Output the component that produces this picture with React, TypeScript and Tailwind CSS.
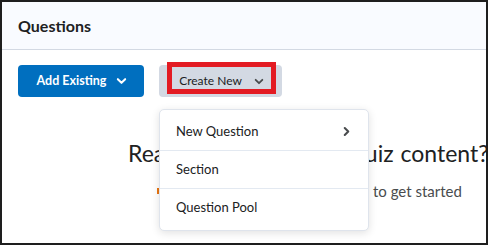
import React from "react";

const font = { fontFamily: "Lato, 'Noto Sans', sans-serif" };

function ChevronDown({ className }: { className?: string }) {
  return (
    <svg viewBox="0 0 12 8" className={className} fill="none" stroke="currentColor" strokeWidth="2.2" strokeLinecap="round" strokeLinejoin="round">
      <path d="M2 2l4 4 4-4" />
    </svg>
  );
}

function ChevronRight({ className }: { className?: string }) {
  return (
    <svg viewBox="0 0 8 12" className={className} fill="none" stroke="currentColor" strokeWidth="2.4" strokeLinecap="round" strokeLinejoin="round">
      <path d="M2 2l4 4-4 4" />
    </svg>
  );
}

export default function App() {
  return (
    <div className="w-[490px] h-[248px] bg-white" style={font}>
      <div className="w-[488px] h-[245px] border-2 border-[#1e1e1e] overflow-hidden flex flex-col">
        <div className="h-[48px] shrink-0 bg-[#f9fbff] border-b border-[#d3d9e3] flex items-center pl-[16px]">
          <span className="text-[16px] font-bold text-[#202122] leading-none">Questions</span>
        </div>
        <div className="flex flex-col pl-[16px] pt-[15px]">
          <div className="flex gap-[15px]">
            <button className="w-[126px] h-[32px] rounded-[4px] bg-[#006fbf] text-white flex items-center justify-center gap-[10px] pl-[2px]">
              <span className="text-[12.5px] font-bold">Add Existing</span>
              <ChevronDown className="w-[11px] h-[8px]" />
            </button>
            <div className="relative">
              <button className="w-[123px] h-[32px] rounded-[4px] bg-[#d3d9e3] text-[#202122] flex items-center justify-center gap-[12px] pl-[2px]">
                <span className="text-[12px]">Create New</span>
                <ChevronDown className="w-[10px] h-[7px] text-[#494c4e]" />
              </button>
              <div className="absolute left-[8px] top-[-3px] w-[109px] h-[32px] border-[5px] border-[#e31b23] pointer-events-none" />
              <div className="absolute left-0 top-[44px] w-[210px] h-[122px] bg-white rounded-[5px] border border-[#dfe4ec] shadow-[0_2px_8px_rgba(0,0,0,0.12)] z-10 flex flex-col py-[3px] text-[13px] text-[#202122]">
                <div className="h-[38px] flex items-center justify-between pl-[16px] pr-[18px] border-b border-[#e3e9f1]">
                  <span>New Question</span>
                  <ChevronRight className="w-[7px] h-[11px] text-[#494c4e]" />
                </div>
                <div className="h-[38px] flex items-center pl-[16px] border-b border-[#e3e9f1]">
                  <span>Section</span>
                </div>
                <div className="h-[38px] flex items-center pl-[16px]">
                  <span>Question Pool</span>
                </div>
              </div>
            </div>
          </div>
          <div className="pl-[110px] mt-[43px] whitespace-nowrap text-[23px] leading-[26px] text-[#202122] [word-spacing:1px]">
            Ready to start adding quiz content?
          </div>
          <div className="pl-[139px] mt-[16px] whitespace-nowrap text-[15px] leading-[18px] text-[#494c4e] flex items-center">
            <span className="inline-block w-[3px] h-[6px] bg-[#e87511] shrink-0" />
            <span className="w-[213px] shrink-0 overflow-hidden flex justify-end pr-[6px]">
              <span>Use Add Existing or Create New</span>
            </span>
            <span>to get started</span>
          </div>
        </div>
      </div>
    </div>
  );
}
